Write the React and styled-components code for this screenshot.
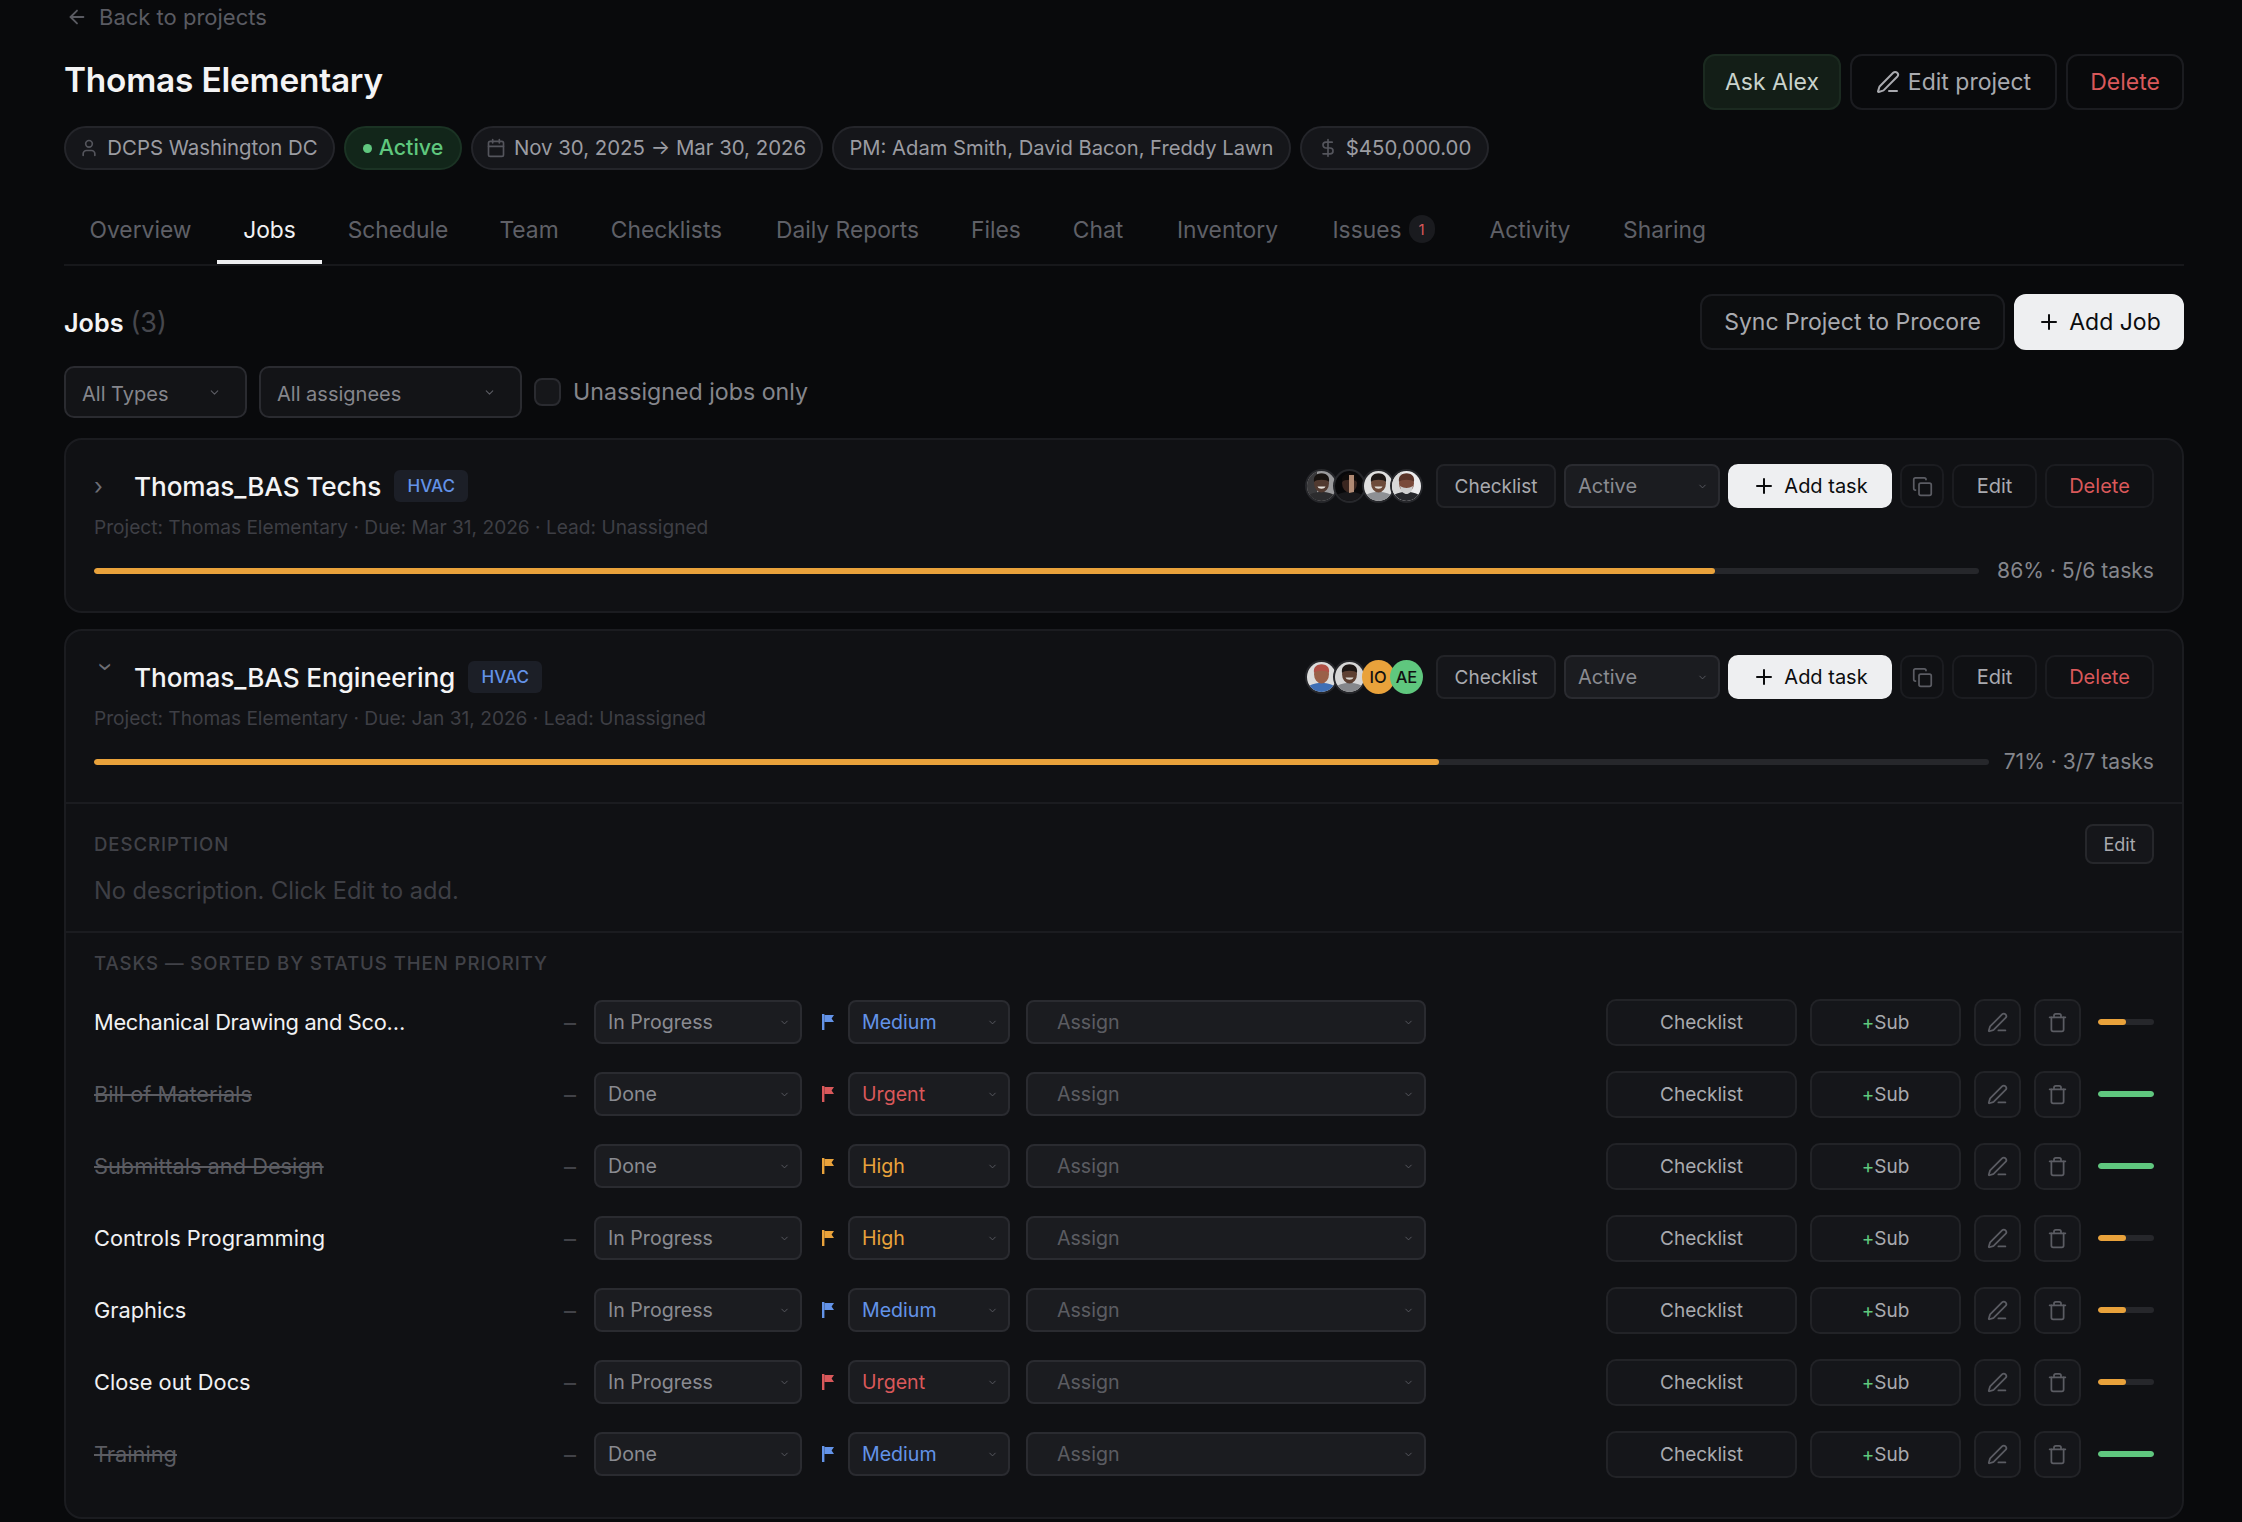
import React from "react";
import styled, { createGlobalStyle } from "styled-components";
import { ArrowLeft, User, Calendar, DollarSign, PenLine, Plus, Copy, Trash, ChevronDown } from "lucide-react";

const C = { amber: "#e9a23b", green: "#5fc77e", blue: "#6393e8", red: "#d9585a" };

const Global = createGlobalStyle`
  html, body { margin: 0; height: 1522px; overflow: hidden; background: #090a0c; }
  body { font-family: "Inter", "Liberation Sans", sans-serif; color: #fff; -webkit-font-smoothing: antialiased; }
  * { box-sizing: border-box; }
`;

const Page = styled.div`
  padding: 4px 58px 0 64px;
`;
const BackLink = styled.div`
  display: flex; align-items: center; gap: 11px; height: 26px; padding-left: 2px;
  font-size: 22px; color: #5a5b62;
`;
const TitleRow = styled.div`
  display: flex; justify-content: space-between; align-items: center; margin-top: 24px;
`;
const Title = styled.h1`
  margin: -4px 0 0; font-size: 33.4px; font-weight: 600; letter-spacing: -0.2px; color: #f4f4f5;
`;
const Actions = styled.div`
  display: flex; gap: 9px;
`;
const Button = styled.button`
  display: inline-flex; align-items: center; justify-content: center; gap: ${p => p.$gap ?? 10}px;
  height: ${p => p.$h || 56}px; width: ${p => p.$w}px; padding: 0;
  font-family: inherit; font-size: ${p => p.$fs || 23}px; font-weight: 400;
  color: ${p => p.$color || "#a9aaaf"};
  background: ${p => p.$bg || "transparent"};
  border: 2px solid ${p => p.$border || "#1b1c20"};
  border-radius: ${p => p.$r || 12}px;
`;
const ChipRow = styled.div`
  display: flex; gap: 9px; margin-top: 16px;
`;
const Chip = styled.div`
  display: flex; align-items: center; justify-content: center; gap: ${p => p.$gap || 8}px;
  width: ${p => p.$w}px; height: 44px; border-radius: 22px; padding: 0 ${p => p.$pr || 0}px 2px 0;
  font-size: ${p => p.$fs || 20.4}px; color: ${p => p.$color || "#9b9ca2"}; font-weight: ${p => p.$fw || 400};
  background: ${p => p.$bg || "#15161a"};
  border: 2px solid ${p => p.$border || "#24252a"};
  svg { color: #54555c; margin-top: 2px; }
`;
const Dot = styled.span`
  width: 9px; height: 9px; border-radius: 50%; background: ${C.green}; margin-top: 2px;
`;
const TabBar = styled.div`
  display: flex; height: 66px; margin-top: 30px; border-bottom: 2px solid #17181b;
`;
const Tab = styled.div`
  display: flex; align-items: center; justify-content: center; gap: 7px; flex: none;
  width: ${p => p.$w}px; height: 64px; padding-bottom: 2px;
  font-size: 22.8px; color: ${p => (p.$active ? "#f1f1f3" : "#5f6067")};
  border-bottom: 4px solid ${p => (p.$active ? "#eeeff1" : "transparent")};
`;
const TabBadge = styled.span`
  display: flex; align-items: center; justify-content: center; width: 26px; height: 28px; border-radius: 13px;
  background: #1a1b1f; color: ${C.red}; font-size: 15px;
`;
const SectionHead = styled.div`
  display: flex; justify-content: space-between; align-items: center; margin-top: 28px;
`;
const SectionTitle = styled.div`
  font-size: 25.2px; font-weight: 600; color: #f4f4f5;
  span { font-weight: 400; font-size: 27px; color: #46474d; margin-left: 7px; }
`;
const Filters = styled.div`
  display: flex; align-items: center; gap: 12px; margin-top: 16px;
`;
const Select = styled.div`
  display: flex; align-items: center; justify-content: space-between; flex: none;
  width: ${p => p.$w}px; height: ${p => p.$h || 44}px;
  padding: 0 ${p => p.$pr || 12}px 0 ${p => p.$pl || 12}px;
  font-size: ${p => p.$fs || 19.6}px; color: ${p => p.$color || "#8a8b91"};
  background: ${p => p.$bg || "#1b1c20"};
  border: 2px solid ${p => p.$border || "#2a2b30"};
  border-radius: ${p => p.$r || 8}px;
  margin-left: ${p => p.$ml || 0}px;
  svg { color: #5b5c63; flex: none; }
`;
const FilterText = styled.span`
  padding-top: 3px;
`;
const CheckBox = styled.span`
  width: 27px; height: 28px; border-radius: 8px; background: #16171a; border: 2px solid #2a2b30;
`;
const CheckLabel = styled.span`
  font-size: 23.2px; color: #85868c;
`;
const Cards = styled.div`
  display: flex; flex-direction: column; gap: 16px; margin-top: 20px;
`;
const Card = styled.div`
  background: #101114; border: 2px solid #1b1c20; border-radius: 18px; overflow: hidden;
`;
const CardHead = styled.div`
  padding: 24px 28px 27px;
`;
const CardTop = styled.div`
  display: flex; align-items: center; justify-content: space-between; height: 44px;
`;
const NameWrap = styled.div`
  display: flex; align-items: center;
`;
const Caret = styled.span`
  display: inline-block; width: 40px; font-size: 23px; line-height: 24px; color: #6d6e74;
`;
const CaretOpen = styled(Caret)`
  width: 24px; margin-right: 16px; margin-top: -24px; text-align: center; padding-left: 4px;
  transform: rotate(90deg); transform-origin: center center;
`;
const JobName = styled.div`
  font-size: 26.2px; font-weight: 500; color: #f4f4f5; letter-spacing: -0.1px;
`;
const Badge = styled.span`
  display: flex; align-items: center; justify-content: center; width: 74px; height: 32px; margin-left: 13px;
  border-radius: 6px; background: #1c1f27; color: ${C.blue}; font-size: 17px; font-weight: 500;
`;
const CardActions = styled.div`
  display: flex; align-items: center; gap: 8px;
`;
const AvatarStack = styled.div`
  display: flex; margin-right: 5px;
`;
const Avatar = styled.span`
  display: flex; align-items: center; justify-content: center; flex: none;
  width: 33px; height: 34px; border-radius: 50%; overflow: hidden;
  margin-left: ${p => (p.$first ? 0 : -4.5)}px;
  border: ${p => (p.$plain ? "none" : "2px solid #26272b")};
  background: ${p => p.$bg || "#333"};
  color: #111; font-size: 16.5px; font-weight: 500;
  svg { display: block; flex: none; }
`;
const Meta = styled.div`
  margin-top: 6px; height: 26px; line-height: 26px; font-size: 19.13px; color: #3e3f45;
`;
const ProgressRow = styled.div`
  display: flex; align-items: center; gap: ${p => p.$gap}px; height: 26px; margin-top: 18px;
`;
const Track = styled.div`
  flex: ${p => (p.$w ? "none" : 1)}; width: ${p => p.$w}px; height: 6px; border-radius: 3px; background: #26272b; overflow: hidden;
`;
const Fill = styled.div`
  height: 100%; border-radius: 3px; background: ${p => p.$color};
`;
const ProgressLabel = styled.span`
  font-size: 21.1px; color: #85868c; white-space: nowrap; margin-bottom: 1px;
`;
const Section = styled.div`
  border-top: 2px solid #1b1c20;
`;
const DescSection = styled(Section)`
  padding: 20px 28px 27px;
`;
const DescHead = styled.div`
  display: flex; justify-content: space-between; align-items: center; height: 40px;
`;
const Label = styled.div`
  font-size: 18.6px; font-weight: 500; letter-spacing: 0.95px; color: #414248; text-transform: uppercase;
`;
const DescText = styled.div`
  margin-top: 14px; height: 26px; line-height: 26px; font-size: 23.6px; color: #3e3f45;
`;
const TaskSection = styled(Section)`
  padding: 19px 28px 27px;
`;
const TaskLabel = styled(Label)`
  height: 22px; line-height: 22px; margin-bottom: 12px;
`;
const Row = styled.div`
  display: flex; align-items: center; height: 72px;
`;
const TaskName = styled.div`
  width: 470px; flex: none; font-size: 21.8px; letter-spacing: ${p => p.$ls || 0}px;
  color: ${p => (p.$done ? "#5b5c62" : "#f1f1f3")};
  text-decoration: ${p => (p.$done ? "line-through" : "none")};
`;
const Dash = styled.span`
  width: 30px; flex: none; font-size: 24px; color: #414248;
`;
const FlagWrap = styled.span`
  display: flex; width: 26px; margin-left: 20px; flex: none;
`;
const Spacer = styled.span`
  flex: 1;
`;
const RowActions = styled.div`
  display: flex; align-items: center; gap: 13px;
`;
const IconBtn = styled(Button)`
  color: #5b5c63;
`;
const MiniTrack = styled(Track)`
  margin-left: 4px;
`;
const PlusMark = styled.span`
  color: ${C.green};
`;

const Flag = ({ color }) => (
  <svg width="12" height="16" viewBox="0 0 12 16"><rect x="0" y="0" width="2.4" height="16" fill={color} /><path d="M2.4 1H12L9.6 4.5 12 8H2.4z" fill={color} /></svg>
);

const Portrait = ({ bg, side, skin, shirt, hair, beard, light, teeth }) => (
  <svg width="33" height="34" viewBox="0 0 33 34">
    <rect width="33" height="34" fill={bg} />
    {side && <rect width="12" height="34" fill={side} />}
    <path d="M1 34c0-9 7-11 15.500-11S32 25 32 34z" fill={shirt} />
    <ellipse cx="16.500" cy="14" rx="7.500" ry="9.500" fill={skin} />
    <path d="M9 13c-1-7 3.500-8.500 7.500-8.500S25 6 24 13c-2-3-13-3-15 0z" fill={hair} />
    {beard && <path d="M10 17c1 6 4 8 6.500 8s5.500-2 6.500-8c-4 2.500-9 2.500-13 0z" fill={beard} />}
    {light && <path d="M16 6h5v17l-5 1z" fill={light} />}
    {teeth && <path d="M12.500 17.500h8c-1 3-7 3-8 0z" fill={teeth} />}
  </svg>
);

const caps = {
  a: <Portrait bg="#9a9a9c" side="#3a3a3c" skin="#513a30" shirt="#2c2c2e" hair="#17120f" teeth="#e6e2dc" />,
  b: <Portrait bg="#08080a" skin="#3a2620" shirt="#18181b" hair="#100c0b" light="#b08a74" />,
  c: <Portrait bg="#dedede" skin="#6d4b3a" shirt="#8e9094" hair="#1c1614" teeth="#e0dcd6" />,
  d: <Portrait bg="#ececed" side="#d8d8d8" skin="#7a4a3a" shirt="#26272b" hair="#5a3429" beard="#cfcfcf" />,
  e: <Portrait bg="#dcdcdc" skin="#9a6048" shirt="#3f6fb5" hair="#b05046" />,
  f: <Portrait bg="#d6d6d6" skin="#5d4032" shirt="#85878b" hair="#1c1614" teeth="#d8d4ce" />,
};

const tabs = [
  ["Overview", 153], ["Jobs", 105], ["Schedule", 152], ["Team", 110], ["Checklists", 165], ["Daily Reports", 197],
  ["Files", 100], ["Chat", 104], ["Inventory", 155], ["Issues", 157], ["Activity", 136], ["Sharing", 133],
];

const tasks = [
  { name: "Mechanical Drawing and Sco…", status: "In Progress", pri: "Medium", c: C.blue, ls: -0.3 },
  { name: "Bill of Materials", status: "Done", pri: "Urgent", c: C.red, done: true },
  { name: "Submittals and Design", status: "Done", pri: "High", c: C.amber, done: true },
  { name: "Controls Programming", status: "In Progress", pri: "High", c: C.amber },
  { name: "Graphics", status: "In Progress", pri: "Medium", c: C.blue },
  { name: "Close out Docs", status: "In Progress", pri: "Urgent", c: C.red },
  { name: "Training", status: "Done", pri: "Medium", c: C.blue, done: true },
];

const Job = ({ open, name, due, avatars, pct, tasksText, gap, children }) => (
  <Card>
    <CardHead>
      <CardTop>
        <NameWrap>
          {open ? <CaretOpen>›</CaretOpen> : <Caret>›</Caret>}
          <JobName>{name}</JobName>
          <Badge>HVAC</Badge>
        </NameWrap>
        <CardActions>
          <AvatarStack>{avatars}</AvatarStack>
          <Button $w={120} $h={44} $fs={19} $r={8} $bg="#15161a" $border="#222327">Checklist</Button>
          <Select $w={156} $fs={20} $pr={10}>Active<ChevronDown size={11} /></Select>
          <Button $w={164} $h={44} $fs={20} $r={10} $gap={8} $color="#0b0c0e" $bg="#eeeff1" $border="#eeeff1"><Plus size={24} />Add task</Button>
          <IconBtn $w={44} $h={44} $r={10}><Copy size={21} /></IconBtn>
          <Button $w={85} $h={44} $fs={20} $r={10}>Edit</Button>
          <Button $w={109} $h={44} $fs={20} $r={10} $color={C.red}>Delete</Button>
        </CardActions>
      </CardTop>
      <Meta>Project: Thomas Elementary · Due: {due} · Lead: Unassigned</Meta>
      <ProgressRow $gap={gap}>
        <Track><Fill $color={C.amber} style={{ width: `${pct}%` }} /></Track>
        <ProgressLabel>{tasksText}</ProgressLabel>
      </ProgressRow>
    </CardHead>
    {children}
  </Card>
);

export default function App() {
  return (
    <Page>
      <Global />
      <BackLink><ArrowLeft size={22} />Back to projects</BackLink>
      <TitleRow>
        <Title>Thomas Elementary</Title>
        <Actions>
          <Button $w={138} $color="#c9d3cc" $bg="#131e17" $border="#1b2a20">Ask Alex</Button>
          <Button $w={207} $gap={8}><PenLine size={24} />Edit project</Button>
          <Button $w={118} $color={C.red}>Delete</Button>
        </Actions>
      </TitleRow>
      <ChipRow>
        <Chip $w={271} $pr={2}><User size={20} />DCPS Washington DC</Chip>
        <Chip $w={118} $gap={7} $fs={21.4} $color={C.green} $fw={500} $bg="#12261a" $border="#1b3324"><Dot />Active</Chip>
        <Chip $w={352} $pr={2}><Calendar size={20} />Nov 30, 2025 → Mar 30, 2026</Chip>
        <Chip $w={459} $fs={20.2}>PM: Adam Smith, David Bacon, Freddy Lawn</Chip>
        <Chip $w={189}><DollarSign size={20} />$450,000.00</Chip>
      </ChipRow>
      <TabBar>
        {tabs.map(([t, w]) => (
          <Tab key={t} $w={w} $active={t === "Jobs"}>{t}{t === "Issues" && <TabBadge>1</TabBadge>}</Tab>
        ))}
      </TabBar>
      <SectionHead>
        <SectionTitle>Jobs<span>(3)</span></SectionTitle>
        <Actions>
          <Button $w={305} $bg="#0c0d0f">Sync Project to Procore</Button>
          <Button $w={170} $color="#0b0c0e" $bg="#eeeff1" $border="#eeeff1" $gap={8}><Plus size={24} />Add Job</Button>
        </Actions>
      </SectionHead>
      <Filters>
        <Select $w={183} $h={52} $fs={20} $r={10} $pl={16} $pr={24} $bg="#131417" $color="#85868c"><FilterText>All Types</FilterText><ChevronDown size={13} /></Select>
        <Select $w={263} $h={52} $fs={20} $r={10} $pl={16} $pr={24} $bg="#131417" $color="#85868c"><FilterText>All assignees</FilterText><ChevronDown size={13} /></Select>
        <CheckBox />
        <CheckLabel>Unassigned jobs only</CheckLabel>
      </Filters>
      <Cards>
        <Job name="Thomas_BAS Techs" due="Mar 31, 2026" pct={86} tasksText="86% · 5/6 tasks" gap={18}
          avatars={<>
            <Avatar $first>{caps.a}</Avatar><Avatar>{caps.b}</Avatar><Avatar>{caps.c}</Avatar><Avatar>{caps.d}</Avatar>
          </>} />
        <Job open name="Thomas_BAS Engineering" due="Jan 31, 2026" pct={71} tasksText="71% · 3/7 tasks" gap={15}
          avatars={<>
            <Avatar $first>{caps.e}</Avatar><Avatar>{caps.f}</Avatar>
            <Avatar $plain $bg={C.amber}>IO</Avatar><Avatar $plain $bg={C.green}>AE</Avatar>
          </>}>
          <DescSection>
            <DescHead>
              <Label>Description</Label>
              <Button $w={69} $h={40} $fs={18} $r={8} $bg="#15161a" $border="#26272b">Edit</Button>
            </DescHead>
            <DescText>No description. Click Edit to add.</DescText>
          </DescSection>
          <TaskSection>
            <TaskLabel>Tasks — sorted by status then priority</TaskLabel>
            {tasks.map(t => (
              <Row key={t.name}>
                <TaskName $done={t.done} $ls={t.ls}>{t.name}</TaskName>
                <Dash>–</Dash>
                <Select $w={208} $pr={10}>{t.status}<ChevronDown size={11} /></Select>
                <FlagWrap><Flag color={t.c} /></FlagWrap>
                <Select $w={162} $pr={10} $color={t.c}>{t.pri}<ChevronDown size={11} /></Select>
                <Select $w={400} $pl={29} $pr={10} $ml={16} $color="#5b5c62">Assign<ChevronDown size={11} /></Select>
                <Spacer />
                <RowActions>
                  <Button $w={191} $h={47} $fs={19} $r={10} $bg="#15161a" $border="#222327">Checklist</Button>
                  <Button $w={151} $h={47} $fs={19} $r={10} $gap={0} $bg="#15161a" $border="#222327"><PlusMark>+</PlusMark>Sub</Button>
                  <IconBtn $w={47} $h={47} $r={10} $bg="#15161a" $border="#222327"><PenLine size={21} /></IconBtn>
                  <IconBtn $w={47} $h={47} $r={10} $bg="#15161a" $border="#222327"><Trash size={21} /></IconBtn>
                  <MiniTrack $w={56}><Fill $color={t.done ? C.green : C.amber} style={{ width: t.done ? "100%" : "50%" }} /></MiniTrack>
                </RowActions>
              </Row>
            ))}
          </TaskSection>
        </Job>
      </Cards>
    </Page>
  );
}
